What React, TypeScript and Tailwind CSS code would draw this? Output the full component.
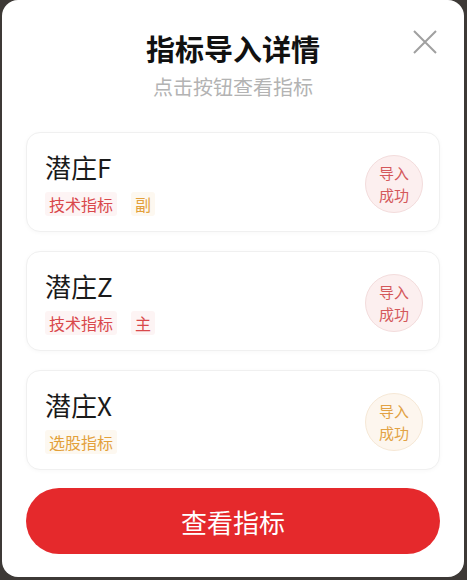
type Tone = "red" | "orange";

type Item = {
  name: string;
  tags: { label: string; tone: Tone }[];
  status: Tone;
};

const items: Item[] = [
  {
    name: "潜庄F",
    tags: [
      { label: "技术指标", tone: "red" },
      { label: "副", tone: "orange" },
    ],
    status: "red",
  },
  {
    name: "潜庄Z",
    tags: [
      { label: "技术指标", tone: "red" },
      { label: "主", tone: "red" },
    ],
    status: "red",
  },
  {
    name: "潜庄X",
    tags: [{ label: "选股指标", tone: "orange" }],
    status: "orange",
  },
];

const tagStyles: Record<Tone, string> = {
  red: "bg-[#fdf4f4] text-[#d9484b]",
  orange: "bg-[#fdf8f0] text-[#e3a03a]",
};

const statusStyles: Record<Tone, string> = {
  red: "border-[#f3dcdc] bg-[#fcefef] text-[#d4585b]",
  orange: "border-[#f6e8d6] bg-[#fdf6ee] text-[#e2a244]",
};

function ImportCard({ item }: { item: Item }) {
  return (
    <div className="flex h-[100px] items-center justify-between rounded-[14px] border border-[#f0f0f0] bg-white pl-[18px] pr-[16px] shadow-[0_1px_4px_rgba(0,0,0,0.03)]">
      <div className="flex flex-col gap-[8px] pt-[1px]">
        <div className="text-[26px] leading-[34px] text-[#1a1a1a]">{item.name}</div>
        <div className="flex gap-[14px]">
          {item.tags.map((tag) => (
            <span
              key={tag.label}
              className={`rounded-[3px] px-[4px] text-[16px] leading-[24px] ${tagStyles[tag.tone]}`}
            >
              {tag.label}
            </span>
          ))}
        </div>
      </div>
      <div
        className={`mt-[4px] flex h-[58px] w-[58px] flex-col items-center justify-center rounded-full border text-[15px] leading-[22px] ${statusStyles[item.status]}`}
      >
        <div>导入</div>
        <div>成功</div>
      </div>
    </div>
  );
}

export default function App() {
  return (
    <div
      className="h-[580px] w-[467px] bg-[#3d3936] pl-[2px]"
      style={{ fontFamily: '"Noto Sans CJK SC", "Noto Sans", sans-serif' }}
    >
      <div className="relative flex h-[577px] w-[462px] flex-col rounded-[16px] bg-white px-[24px] pt-[29px]">
        <button
          type="button"
          aria-label="关闭"
          className="absolute right-[27px] top-[30px] text-[#a0a0a0]"
        >
          <svg width="24" height="24" viewBox="0 0 24 24" fill="none" stroke="currentColor" strokeWidth="2">
            <path d="M1 1L23 23M23 1L1 23" />
          </svg>
        </button>
        <h1 className="text-center text-[29px] font-bold leading-[38px] text-[#111]">
          指标导入详情
        </h1>
        <p className="mt-[8px] text-center text-[20px] leading-[24px] text-[#b3b3b3]">
          点击按钮查看指标
        </p>
        <div className="mt-[33px] flex flex-col gap-[19px]">
          {items.map((item) => (
            <ImportCard key={item.name} item={item} />
          ))}
        </div>
        <button
          type="button"
          className="mt-[18px] h-[66px] w-full rounded-full bg-[#e5292c] text-[26px] text-white"
        >
          查看指标
        </button>
      </div>
    </div>
  );
}
